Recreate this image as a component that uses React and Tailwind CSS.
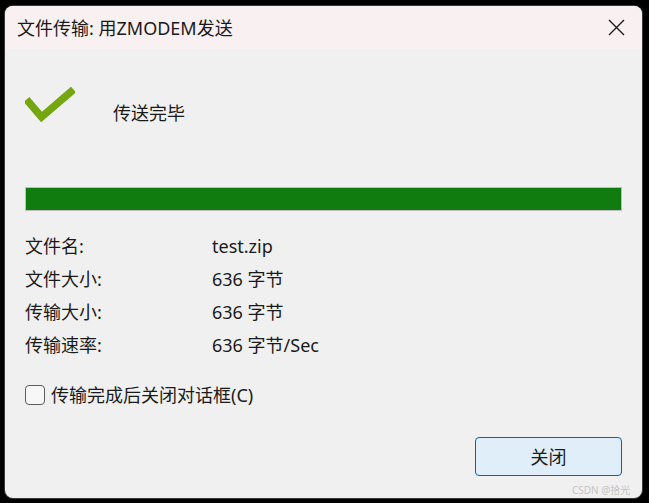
import React from "react";

const rows = [
  { label: "文件名:", value: "test.zip" },
  { label: "文件大小:", value: "636 字节" },
  { label: "传输大小:", value: "636 字节" },
  { label: "传输速率:", value: "636 字节/Sec" },
];

function CheckMark() {
  return (
    <svg width="50" height="36" viewBox="0 0 50 36" className="shrink-0">
      <polyline points="1.5,12.5 16.5,30 48.5,2.5" fill="none" stroke="#74a70f" strokeWidth="7.5" />
    </svg>
  );
}

function CloseIcon() {
  return (
    <svg width="17" height="17" viewBox="0 0 17 17">
      <path d="M1 1 L16 16 M16 1 L1 16" stroke="#1b1b1b" strokeWidth="1.4" fill="none" />
    </svg>
  );
}

export default function App() {
  return (
    <div
      className="relative w-[649px] h-[503px] overflow-hidden bg-black pl-[5px] pt-[6px] text-[#1a1a1a]"
      style={{ fontFamily: '"Noto Sans", "Noto Sans CJK SC", sans-serif' }}
    >
      <div className="flex h-[492px] w-[637px] flex-col overflow-hidden rounded-[8px] bg-[#f0f0f0] shadow-[0_0_0_1px_#3a3a3a]">
        <div className="flex h-[43px] shrink-0 items-center justify-between bg-[#f9f0f1] pl-[12px] pr-[17px]">
          <span className="text-[18px] leading-none">文件传输: 用ZMODEM发送</span>
          <CloseIcon />
        </div>

        <div className="flex flex-1 flex-col px-[20px]">
          <div className="mt-[38px] flex h-[36px] items-end">
            <CheckMark />
            <span className="mb-[1px] ml-[38px] text-[18px] leading-[18px]">传送完毕</span>
          </div>

          <div className="mt-[64px] h-[24px] w-[597px] border border-[#bcbcbc] bg-[#e6e6e6]">
            <div className="h-full w-full bg-[#107c10]" />
          </div>

          <div className="mt-[19px] flex flex-col">
            {rows.map((row) => (
              <div key={row.label} className="flex h-[33px] items-center text-[18px] leading-[33px]">
                <span className="w-[187px]">{row.label}</span>
                <span>{row.value}</span>
              </div>
            ))}
          </div>

          <label className="mt-[23px] flex h-[20px] items-center gap-[6px] text-[18px] leading-[20px]">
            <span className="h-[20px] w-[20px] shrink-0 rounded-[4px] border border-[#5d5d5d] bg-[#f7f7f7]" />
            <span>传输完成后关闭对话框(C)</span>
          </label>

          <div className="mt-[32px] flex justify-end">
            <button className="flex h-[39px] w-[147px] items-center justify-center rounded-[4px] border border-[#0067c0] bg-[#e0eef9] text-[18px] leading-none">
              关闭
            </button>
          </div>
        </div>
      </div>

      <span className="absolute left-[572px] top-[485px] text-[10px] leading-none text-[#c4c4c4]">CSDN @拾光</span>
    </div>
  );
}
